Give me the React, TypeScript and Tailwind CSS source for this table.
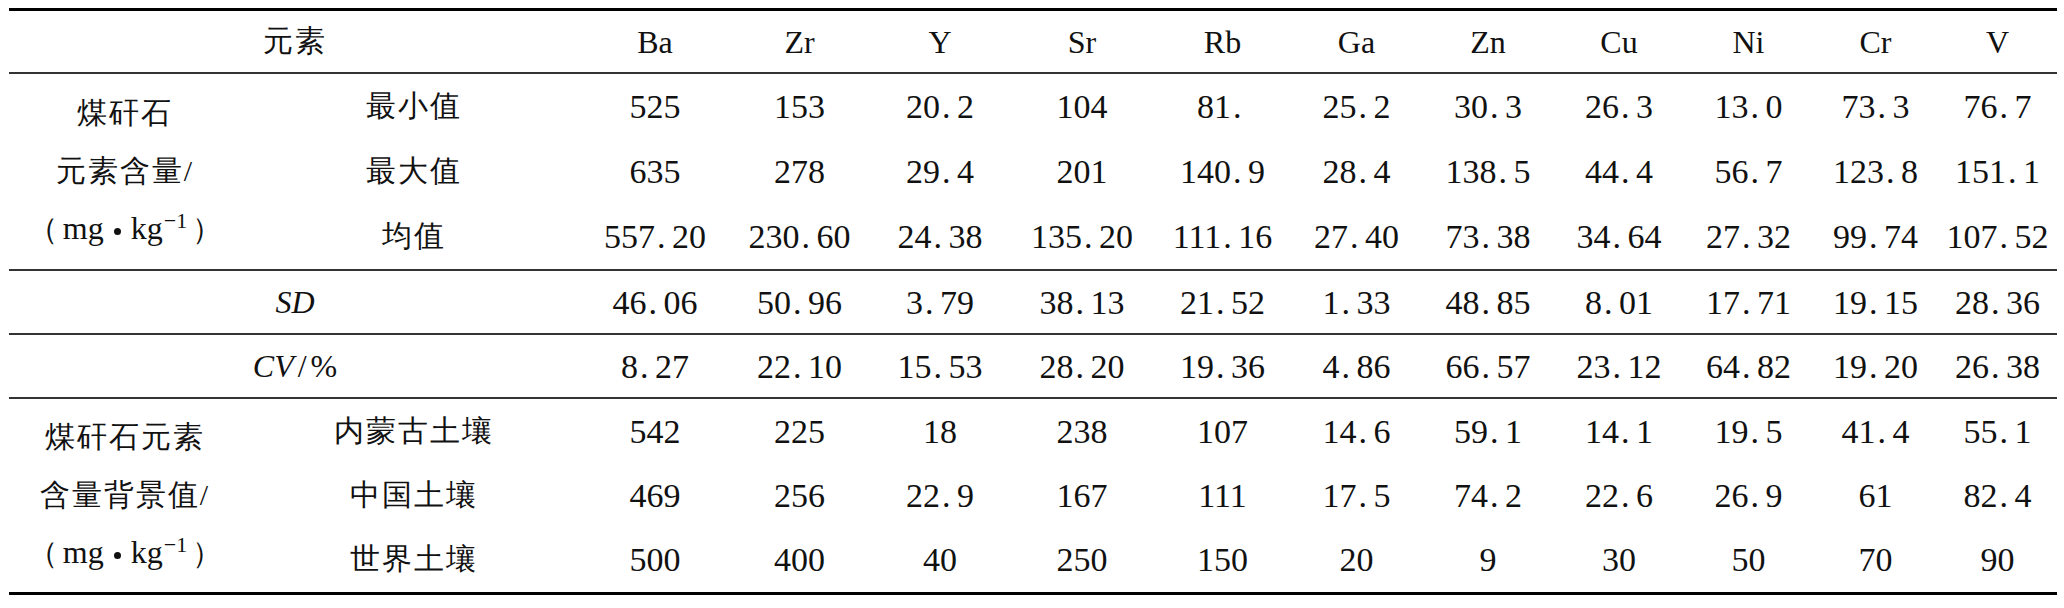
const row = "grid grid-cols-[238px_334px_148px_141px_140px_144px_137px_131px_132px_130px_129px_125px_119px]";
const latin = "[font-family:'Liberation_Serif','Times_New_Roman',serif]";

const elements = ["Ba", "Zr", "Y", "Sr", "Rb", "Ga", "Zn", "Cu", "Ni", "Cr", "V"];

const stats = [
  { label: "最小值", values: ["525", "153", "20.2", "104", "81.", "25.2", "30.3", "26.3", "13.0", "73.3", "76.7"] },
  { label: "最大值", values: ["635", "278", "29.4", "201", "140.9", "28.4", "138.5", "44.4", "56.7", "123.8", "151.1"] },
  { label: "均值", values: ["557.20", "230.60", "24.38", "135.20", "111.16", "27.40", "73.38", "34.64", "27.32", "99.74", "107.52"] },
];

const sd = ["46.06", "50.96", "3.79", "38.13", "21.52", "1.33", "48.85", "8.01", "17.71", "19.15", "28.36"];
const cv = ["8.27", "22.10", "15.53", "28.20", "19.36", "4.86", "66.57", "23.12", "64.82", "19.20", "26.38"];

const background = [
  { label: "内蒙古土壤", values: ["542", "225", "18", "238", "107", "14.6", "59.1", "14.1", "19.5", "41.4", "55.1"] },
  { label: "中国土壤", values: ["469", "256", "22.9", "167", "111", "17.5", "74.2", "22.6", "26.9", "61", "82.4"] },
  { label: "世界土壤", values: ["500", "400", "40", "250", "150", "20", "9", "30", "50", "70", "90"] },
];

// digits are set like the half-width numerals of a Song face: the point takes a full digit slot
function Num({ v }: { v: string }) {
  const i = v.indexOf(".");
  if (i < 0) return <span className={`text-[34px] ${latin}`}>{v}</span>;
  return (
    <span className={`text-[34px] whitespace-nowrap ${latin}`}>
      {v.slice(0, i)}
      <span className="inline-block w-[0.5em] pl-[2px] text-left">.</span>
      {v.slice(i + 1)}
    </span>
  );
}

function Unit() {
  return (
    <span className="whitespace-nowrap">
      （<span className={`text-[32px] px-[5px] ${latin}`}>
        mg<span className="inline-block w-[7px] h-[7px] rounded-full bg-[#111] mx-[10px] align-middle" />kg
        <sup className="text-[22px] ml-[1px]">−1</sup>
      </span>）
    </span>
  );
}

function Cell({ children, className = "" }: { children: React.ReactNode; className?: string }) {
  return <div className={`flex items-center justify-center ${className}`}>{children}</div>;
}

function Group({ title, rows, last }: { title: React.ReactNode; rows: { label: string; values: string[] }[]; last?: boolean }) {
  return (
    <div className={`${row} grid-rows-3 ${last ? "h-[196px] border-b-[3px] border-black" : "h-[197px] border-b-2 border-[#333]"}`}>
      <div className="row-span-3 flex items-center justify-center pr-[6px]">
        <div className="text-center leading-[57px] tracking-[2px]">{title}</div>
      </div>
      {rows.map((r) => [
        <Cell key={r.label} className="tracking-[2px]">{r.label}</Cell>,
        ...r.values.map((v, j) => (
          <Cell key={r.label + j}>
            <Num v={v} />
          </Cell>
        )),
      ])}
    </div>
  );
}

export default function App() {
  return (
    <div className="w-[2064px] h-[608px] bg-white pt-[8px] px-[9px] text-[30px] text-[#111] font-serif [font-family:'Noto_Serif_CJK_SC','Noto_Sans_CJK_SC',serif]">
      <div className="w-[2048px] border-t-[3px] border-black">
        <div className={`${row} h-[63px] border-b-2 border-[#333]`}>
          <Cell className="col-span-2 tracking-[2px]">元素</Cell>
          {elements.map((e) => (
            <Cell key={e} className={`text-[32px] ${latin}`}>{e}</Cell>
          ))}
        </div>

        <Group
          title={
            <>
              <div>煤矸石</div>
              <div>
                元素含量<span className={latin}>/</span>
              </div>
              <div className="tracking-normal"><Unit /></div>
            </>
          }
          rows={stats}
        />

        <div className={`${row} h-[64px] border-b-2 border-[#333]`}>
          <Cell className={`col-span-2 italic text-[32px] ${latin}`}>SD</Cell>
          {sd.map((v, j) => (
            <Cell key={j}>
              <Num v={v} />
            </Cell>
          ))}
        </div>

        <div className={`${row} h-[64px] border-b-2 border-[#333]`}>
          <Cell className={`col-span-2 text-[32px] ${latin}`}>
            <span className="italic">CV</span>
            <span className="ml-[4px]">/</span>
            <span className="ml-[4px]">%</span>
          </Cell>
          {cv.map((v, j) => (
            <Cell key={j}>
              <Num v={v} />
            </Cell>
          ))}
        </div>

        <Group
          title={
            <>
              <div>煤矸石元素</div>
              <div>
                含量背景值<span className={latin}>/</span>
              </div>
              <div className="tracking-normal"><Unit /></div>
            </>
          }
          rows={background}
          last
        />
      </div>
    </div>
  );
}
